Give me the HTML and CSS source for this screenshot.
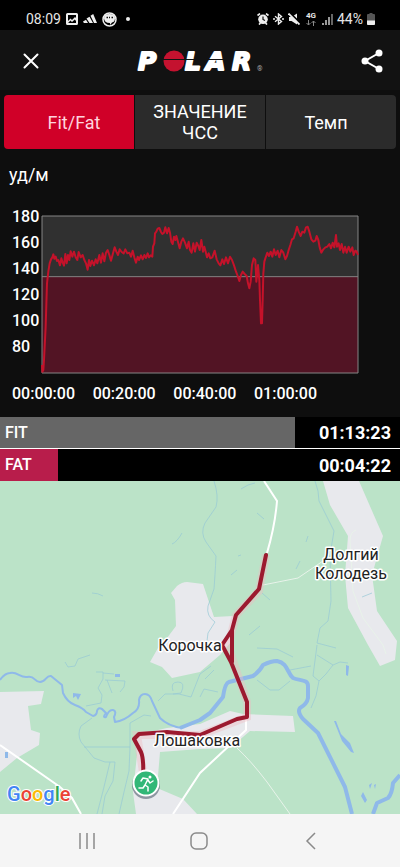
FILE: index.html
```
<!DOCTYPE html>
<html lang="ru">
<head>
    <meta charset="UTF-8">
    <meta name="viewport" content="width=device-width, initial-scale=1.0">
    <title>Polar - Fit/Fat</title>
    <link rel="stylesheet" href="styles.css">
</head>
<body>

    <div class="status-bar">
        <div class="status-left">
            <span class="clock">08:09</span>
            <svg width="12" height="12" viewBox="0 0 12 12"><path fill="#eee" fill-rule="evenodd" d="M1.5 0h9A1.5 1.5 0 0 1 12 1.500v9A1.500 1.500 0 0 1 10.500 12h-9A1.500 1.500 0 0 1 0 10.500v-9A1.500 1.500 0 0 1 1.500 0zM2 2v6l2.500-2.500L6 7l3-3 1 1V2zM2 10h8V8L8.800 6.500 6 9 4.500 7.500z"/></svg>
            <svg width="14" height="12" viewBox="0 0 14 12"><path fill="#eee" d="M0 8.500l3-1.700L5 10H.9zM3.500 5.500L6.500 3.800 10 10H6.500zM7.500 2.700L10.200 1 14 10h-3z"/></svg>
            <svg width="15" height="15" viewBox="0 0 15 15"><circle cx="7.500" cy="7.500" r="6.500" fill="none" stroke="#eee" stroke-width="1.500"/><path fill="#eee" d="M2 6q0-4 5.500-4T13 6t-3 4.500l-2 2.500v-2Q2 11 2 6z"/><path stroke="#111" stroke-width="1.300" d="M4.500 5.500H6M7 5.500h1M9.500 5.500H11"/></svg>
            <span class="dot"></span>
        </div>
        <div class="status-right">
            <svg width="12" height="12" viewBox="0 0 12 12"><circle cx="6" cy="6.300" r="4.800" fill="#eee"/><path stroke="#eee" stroke-width="1.700" d="M.5 2.500L3 .6M11.500 2.500L9 .6M2 11.500l1.500-1.500M10 11.500L8.500 10"/><path fill="none" stroke="#111" stroke-width="1.200" d="M6 3.500v3l2 1"/></svg>
            <svg width="11" height="12" viewBox="0 0 11 12"><path fill="none" stroke="#eee" stroke-width="1.400" d="M2 3.200l6.500 5.300L5.500 11V1l3 2.500L2 8.800"/><path stroke="#eee" stroke-width="1.600" d="M0 6h2M9 6h2"/></svg>
            <svg width="12" height="12" viewBox="0 0 12 12"><path fill="#eee" d="M1 4h2.500L9 .5v11L3.500 8H1z"/><path stroke="#000" stroke-width="2" d="M2 0l10 10"/><path stroke="#eee" stroke-width="1.800" d="M.5.500l11 11"/></svg>
            <span class="network">4G<svg width="10" height="6" viewBox="0 0 10 6"><path fill="none" stroke="#888" d="M2.500 0v5M.5 3l2 2 2-2M7.500 6V1M5.500 3l2-2 2 2"/></svg></span>
            <svg width="11" height="11" viewBox="0 0 11 11"><path stroke="#ccc" stroke-width="1.500" d="M1 11V9M4 11V6M7 11V3"/><path stroke="#888" stroke-width="1.500" d="M10 11V0"/></svg>
            <span class="battery-text">44%</span>
            <svg width="8" height="12" viewBox="0 0 8 12"><path fill="#555" d="M2.500 0h3v1H7q1 0 1 1v9q0 1-1 1H1q-1 0-1-1V2q0-1 1-1h1.500z"/><path fill="#eee" d="M0 7.500h8V11q0 1-1 1H1q-1 0-1-1z"/></svg>
        </div>
    </div>

    <header class="app-header">
        <button class="icon-btn" aria-label="Закрыть">
            <svg width="16" height="16" viewBox="0 0 16 16"><path fill="none" stroke="#fff" stroke-width="2" stroke-linecap="round" d="M1.500 1.500l13 13M14.500 1.500l-13 13"/></svg>
        </button>
        <svg class="logo" width="136" height="40" viewBox="0 0 136 40" role="img" aria-label="Polar">
            <text class="logo-text" y="29"><tspan x="4">P</tspan><tspan x="51">L</tspan><tspan x="72">A</tspan><tspan x="98">R</tspan></text>
            <circle cx="40" cy="20" r="10.500" fill="#c4122f"/>
            <path stroke="#121212" d="M29 18.500h66"/>
            <text class="logo-mark" x="123" y="30">®</text>
        </svg>
        <button class="icon-btn" aria-label="Поделиться">
            <svg width="22" height="24" viewBox="0 0 22 24"><path fill="none" stroke="#fff" stroke-width="2" d="M18 4L4 12l14 8"/><circle cx="18" cy="4" r="3.500" fill="#fff"/><circle cx="4" cy="12" r="3.500" fill="#fff"/><circle cx="18" cy="20" r="3.500" fill="#fff"/></svg>
        </button>
    </header>

    <main>
        <div class="tabs">
            <button class="tab active">Fit/Fat</button>
            <button class="tab">ЗНАЧЕНИЕ<br>ЧСС</button>
            <button class="tab">Темп</button>
        </div>

        <section class="chart">
            <div class="unit">уд/м</div>
            <div class="chart-body">
                <div class="y-axis">
                    <span>180</span>
                    <span>160</span>
                    <span>140</span>
                    <span>120</span>
                    <span>100</span>
                    <span>80</span>
                </div>
                <svg class="plot" viewBox="127 48 948 471" preserveAspectRatio="none">
                    <rect class="zone-fit" x="127" y="48" width="948" height="182"/>
                    <rect class="zone-fat" x="127" y="230" width="948" height="289"/>
                    <path class="frame" d="M127 48H1075V519H127zM127 230H1075"/>
                    <polyline class="pulse" points="127,495 128,515 131,510 133,480 138,380 142,250 146,215 150,190 154,178 158,172 161,163 164,176 168,170 172,183 176,180 181,196 185,175 189,188 193,197 197,162 201,190 205,165 209,180 213,154 218,170 223,155 228,172 233,180 237,156 243,172 249,165 254,180 259,190 264,209 268,180 272,198 277,182 283,196 288,178 293,190 299,165 304,188 309,160 314,184 319,158 324,150 329,165 334,182 340,160 345,142 350,155 355,165 360,148 366,156 372,160 377,148 383,160 389,158 394,170 399,152 404,172 409,188 414,170 418,180 424,166 429,178 434,165 439,174 444,160 448,172 453,166 458,170 460,140 464,130 466,100 470,95 474,86 479,84 484,96 488,102 493,98 497,82 502,100 507,84 511,98 515,125 519,132 523,110 527,120 530,108 536,130 540,145 545,125 550,115 556,128 562,145 567,125 571,150 576,158 581,130 586,155 591,128 596,138 600,150 605,120 610,155 614,140 618,155 622,172 627,160 632,175 638,172 645,152 651,178 657,190 662,196 668,178 673,192 679,172 685,190 691,170 697,180 703,196 708,212 714,228 719,243 724,225 729,215 735,222 741,228 745,250 749,265 753,245 757,195 762,175 767,180 770,245 775,195 779,240 781,300 784,370 787,370 789,300 791,220 794,185 798,172 803,158 808,168 813,155 818,170 823,148 828,165 834,152 839,172 845,150 851,158 857,178 862,168 867,150 872,135 877,118 882,115 888,95 892,80 897,95 903,108 908,95 914,98 919,82 924,80 929,95 935,118 941,125 947,122 951,108 956,120 960,142 965,158 971,148 977,142 983,140 989,132 994,145 999,128 1004,142 1009,105 1012,140 1017,130 1021,150 1026,132 1031,158 1036,140 1041,158 1047,140 1052,155 1058,142 1062,165 1067,152 1071,155 1075,165"/>
                </svg>
            </div>
            <div class="x-axis">
                <span>00:00:00</span>
                <span>00:20:00</span>
                <span>00:40:00</span>
                <span>01:00:00</span>
            </div>
        </section>

        <div class="zones">
            <div class="zone">
                <div class="zone-bar fit" style="width: 73.8%">FIT</div>
                <span class="zone-time">01:13:23</span>
            </div>
            <div class="zone">
                <div class="zone-bar fat" style="width: 14.5%">FAT</div>
                <span class="zone-time">00:04:22</span>
            </div>
        </div>

        <section class="map">
            <svg viewBox="0 0 400 333" preserveAspectRatio="xMidYMid slice">
                <rect width="400" height="333" fill="#bbe3c8"/>

                <!-- villages -->
                <g class="village">
                    <path d="M171 112L177 105Q182 101 187 101L203 103 214 136 233 135 232 160 220 174 200 191 172 197 162 186 150 181 158 167 167 157 176 145 175 119z"/>
                    <path d="M323 0H359L383 55 372 94 377 130 397 160 395 179 380 185 368 164 348 127 345 94 348 55 330 24z"/>
                    <path d="M0 211L44 210 41 223 28 225 31 249 40 252 39 264 17 277 0 291z"/>
                    <path d="M135 254L167 247 200 243 230 230 243 233 293 235 295 251 250 250 230 267 200 268 160 271 157 307 183 318 197 333H136L133 311 137 274z"/>
                </g>

                <!-- streams -->
                <g class="stream">
                    <path d="M214 0Q219 15 216 26L205 42Q200 52 206 61L216 75Q215 95 214 108L208 125Q206 135 215 141L208 152 206 168M315 0Q319 10 319 20L334 50 330 74 331 120 328 140 320 147 317 162 336 167"/>
                    <path d="M241 8L248 4 255 2M257 32L264 38M308 55L306 61M300 80L296 88M238 75L241 74M231 94L237 89M262 112L270 119M249 154L260 145M362 116L372 112M172 63Q177 61 182 52M92 112Q98 112 103 115"/>
                    <path d="M317 164L313 195 319 200 316 215 311 227M319 200L326 193 333 184 317 174M333 184L340 181 348 182M290 189L311 185M257 167L277 168 293 176M257 199L270 209 279 209 290 200"/>
                    <path d="M65 181L68 186 75 185 78 178 90 174M96 191L103 191 103 198 98 207 102 214 101 222 86 225M103 192L114 193M105 199L125 200 124 206 120 211M107 199L112 212M173 210Q170 201 178 201T181 212L173 213M158 220L165 213 179 213 191 216 200 193 211 185M200 216L204 208 218 211M205 198L214 189"/>
                    <path d="M92 237L81 245Q77 253 81 261L94 277 105 281 115 281 113 300 105 315 102 333M110 281L103 310 97 333M84 266H130L129 290 124 311 119 333M130 266L130 242 144 234 151 235"/>
                </g>

                <!-- river and ponds -->
                <g class="river">
                    <path d="M0 199Q5 192 10 192C17 190 20 197 27 196 35 194 34 201 40 201 46 201 46 194 51 195L62 204 63 212Q67 221 75 224T86 231L93 235Q97 234 97 230 98 226 102 228L106 232Q102 237 106 236 109 228 113 229T114 236L115 241Q124 240 133 232 140 228 139 219 140 213 145 213 150 213 152 220L160 237Q168 245 182 247"/>
                    <path class="wide" d="M180 247L200 239 210 232 223 216Q225 202 229 201L253 195Q260 190 263 184 271 180 277 180C288 182 287 192 293 197 300 200 308 198 308 205V217Q307 223 300 227 297 231 303 238L318 252 345 306 352 333M373 333L377 322 388 317Q392 313 393 302L400 294"/>
                    <path class="pond" d="M73 212L81 213 78 219 76 215 73 217zM115 193h5v3h-5zM5 271h3v6H5zM334 240L336 240 341 253 350 262 354 272 351 271 342 260zM361 315L363 311 367 319 365 322zM369 304L372 302 370 308zM374 304L376 303 375 308zM346 184L349 185 348 195 346 194z"/>
                </g>

                <!-- roads -->
                <g class="road">
                    <path d="M264 0L277 20Q275 45 267 72M0 264L60 306 72 317 81 333M246 236V249L200 292 173 333"/>
                    <path class="minor" d="M263 104L298 97 323 80M356 49Q350 51 350 60L353 110 363 137 383 164 386 173M237 267Q251 280 267 301L290 333"/>
                </g>

                <!-- track -->
                <path class="track-glow" d="M266 74L259 110 236 134 228 165 247 221 247 236 200 254 137 254 143 291"/>
                <path class="track" d="M266 74L259 108 236 134 232 149 222 164 231 181 247 221V236L237 238 200 254 167 251 139 253 134 258 141 271Q144 278 143 297M232 149V181"/>

                <!-- start marker -->
                <circle cx="146" cy="304" r="14" fill="#345" opacity="0.5"/>
                <circle cx="146" cy="302" r="12.500" fill="#32b777" stroke="#fff" stroke-width="2"/>
                <circle cx="150" cy="296" r="1.500" fill="#fff"/>
                <path class="runner" d="M141 300L143 297 148 298 145 304 148 306 148 310M145 304L143 307H139M148 299L150 302 153 300"/>

                <g class="places">
                    <text x="351" y="79">Долгий</text>
                    <text x="351" y="98">Колодезь</text>
                    <text x="190" y="170">Корочка</text>
                    <text x="197" y="265">Лошаковка</text>
                </g>
                <text class="google" x="7" y="320"><tspan fill="#4285f4">G</tspan><tspan fill="#ea4335">o</tspan><tspan fill="#fbbc05">o</tspan><tspan fill="#4285f4">g</tspan><tspan fill="#34a853">l</tspan><tspan fill="#ea4335">e</tspan></text>
            </svg>
        </section>
    </main>

    <nav class="nav-bar">
        <button aria-label="Недавние"><svg width="18" height="18" viewBox="0 0 18 18"><path stroke="#8a8a8a" stroke-width="1.500" d="M2 1v16M9 1v16M16 1v16"/></svg></button>
        <button aria-label="Домой"><svg width="18" height="18" viewBox="0 0 18 18"><rect x="1" y="1" width="16" height="16" rx="5" fill="none" stroke="#8a8a8a" stroke-width="1.500"/></svg></button>
        <button aria-label="Назад"><svg width="18" height="18" viewBox="0 0 18 18"><path fill="none" stroke="#8a8a8a" stroke-width="1.500" d="M13 1L5 9l8 8"/></svg></button>
    </nav>

</body>
</html>
```
FILE: styles.css
```
* {
    box-sizing: border-box;
}

body {
    font-family: Roboto, sans-serif;
    background-color: #0e0e0e;
    color: white;
    margin: 0;
    min-height: 100vh;
    display: flex;
    flex-direction: column;
}

button {
    font-family: inherit;
    border: none;
    padding: 0;
    background: none;
    color: inherit;
    cursor: pointer;
}

svg {
    display: block;
    flex-shrink: 0;
}

.status-bar {
    display: flex;
    justify-content: space-between;
    height: 30px;
    padding: 8px 25px 0 26px;
    background-color: #000;
    color: #e6e6e6;
}

.status-left,
.status-right {
    display: flex;
    align-items: center;
    height: 22px;
    gap: 5px;
}

.status-right {
    gap: 4px;
}

.clock {
    font-size: 14px;
}

.battery-text {
    font-size: 14px;
}

.dot {
    width: 4px;
    height: 4px;
    margin-left: 4px;
    border-radius: 50%;
    background-color: #eee;
}

.network {
    margin: 0 2px;
    font-size: 8px;
    line-height: 8px;
    font-weight: bold;
}

.app-header {
    display: flex;
    align-items: center;
    justify-content: space-between;
    height: 60px;
    padding: 2px 16px 0 19px;
    background-color: #121212;
}

.icon-btn {
    display: flex;
    align-items: center;
    justify-content: center;
    width: 24px;
    height: 32px;
}

.logo-text {
    font-family: "DejaVu Sans", sans-serif;
    font-size: 25px;
    font-weight: bold;
    font-style: oblique;
    fill: #fff;
    stroke: #fff;
    stroke-width: 2;
    stroke-linejoin: round;
}

.logo-mark {
    font-size: 7px;
    fill: #aaa;
}

main {
    display: flex;
    flex-direction: column;
    flex: 1;
}

.tabs {
    display: grid;
    grid-template-columns: repeat(3, 1fr);
    gap: 1px;
    margin: 5px 4px 0;
    border-radius: 4px;
    overflow: hidden;
}

.tab {
    height: 54px;
    font-size: 18px;
    line-height: 21px;
    background-color: #2b2b2b;
}

.tab:first-child {
    padding-left: 10px;
}

.tab:last-child {
    padding-right: 10px;
}

.tab.active {
    background-color: #d00028;
    color: #ffd3de;
}

.chart {
    padding: 14px 0 13px;
}

.unit {
    padding-left: 9px;
    font-size: 18px;
    line-height: 24px;
}

.chart-body {
    display: flex;
    padding: 16px 42px 0 12px;
}

.y-axis {
    display: flex;
    flex-direction: column;
    width: 30px;
    padding-top: 1px;
    font-size: 16px;
    font-weight: 500;
    line-height: 26px;
}

.plot {
    flex: 1;
    min-width: 0;
    height: 157px;
    margin-top: 13px;
    overflow: visible;
}

.zone-fit {
    fill: #303030;
}

.zone-fat {
    fill: #521424;
}

.frame,
.pulse {
    fill: none;
    vector-effect: non-scaling-stroke;
}

.frame {
    stroke: #858585;
}

.pulse {
    stroke: #c4122a;
    stroke-width: 2;
    stroke-linejoin: round;
}

.x-axis {
    display: flex;
    justify-content: space-between;
    padding: 11px 83px 0 12px;
    font-size: 16px;
    font-weight: 500;
    line-height: 20px;
}

.zone {
    display: flex;
    align-items: center;
    justify-content: space-between;
    height: 32px;
    padding-right: 9px;
    background-color: #000;
    position: relative;
}

.zone:first-child {
    border-bottom: 1px solid #fff;
}

.zone-bar {
    position: absolute;
    left: 0;
    height: 100%;
    padding-left: 5px;
    font-size: 16px;
    font-weight: 500;
    line-height: 32px;
}

.zone-bar.fit {
    background-color: #666;
}

.zone-bar.fat {
    background-color: #b81d4b;
}

.zone-time {
    margin-left: auto;
    font-size: 18px;
    font-weight: bold;
}

.map {
    display: flex;
    flex: 1;
    min-height: 200px;
}

.map svg {
    width: 100%;
}

.village {
    fill: #e8e9ed;
}

.stream {
    fill: none;
    stroke: #96c8d5;
    stroke-width: 0.7;
}

.river {
    fill: none;
    stroke: #8fb9e9;
    stroke-width: 2;
    stroke-linejoin: round;
}

.river .wide {
    stroke-width: 4;
}

.river .pond {
    fill: #8fb9e9;
    stroke: none;
}

.road {
    fill: none;
    stroke: #fff;
    stroke-width: 2;
}

.road .minor {
    stroke: #e8f3ea;
    stroke-width: 1;
}

.track-glow {
    fill: none;
    stroke: #f0b9c0;
    stroke-width: 8;
    opacity: 0.4;
}

.track {
    fill: none;
    stroke: #9c1a2f;
    stroke-width: 4;
    stroke-linecap: round;
    stroke-linejoin: round;
}

.runner {
    fill: none;
    stroke: #fff;
    stroke-width: 1.5;
    stroke-linecap: round;
    stroke-linejoin: round;
}

.places {
    font-size: 16px;
    text-anchor: middle;
    fill: #222;
    stroke: #fff;
    stroke-width: 3;
    stroke-linejoin: round;
    paint-order: stroke;
}

.google {
    font-size: 20px;
    font-weight: 500;
    stroke: #fff;
    stroke-width: 2;
    paint-order: stroke;
}

.nav-bar {
    display: flex;
    height: 53px;
    padding: 0 33px 0 31px;
    background-color: #f5f5f5;
}

.nav-bar button {
    display: flex;
    flex: 1;
    align-items: center;
    justify-content: center;
}
```
